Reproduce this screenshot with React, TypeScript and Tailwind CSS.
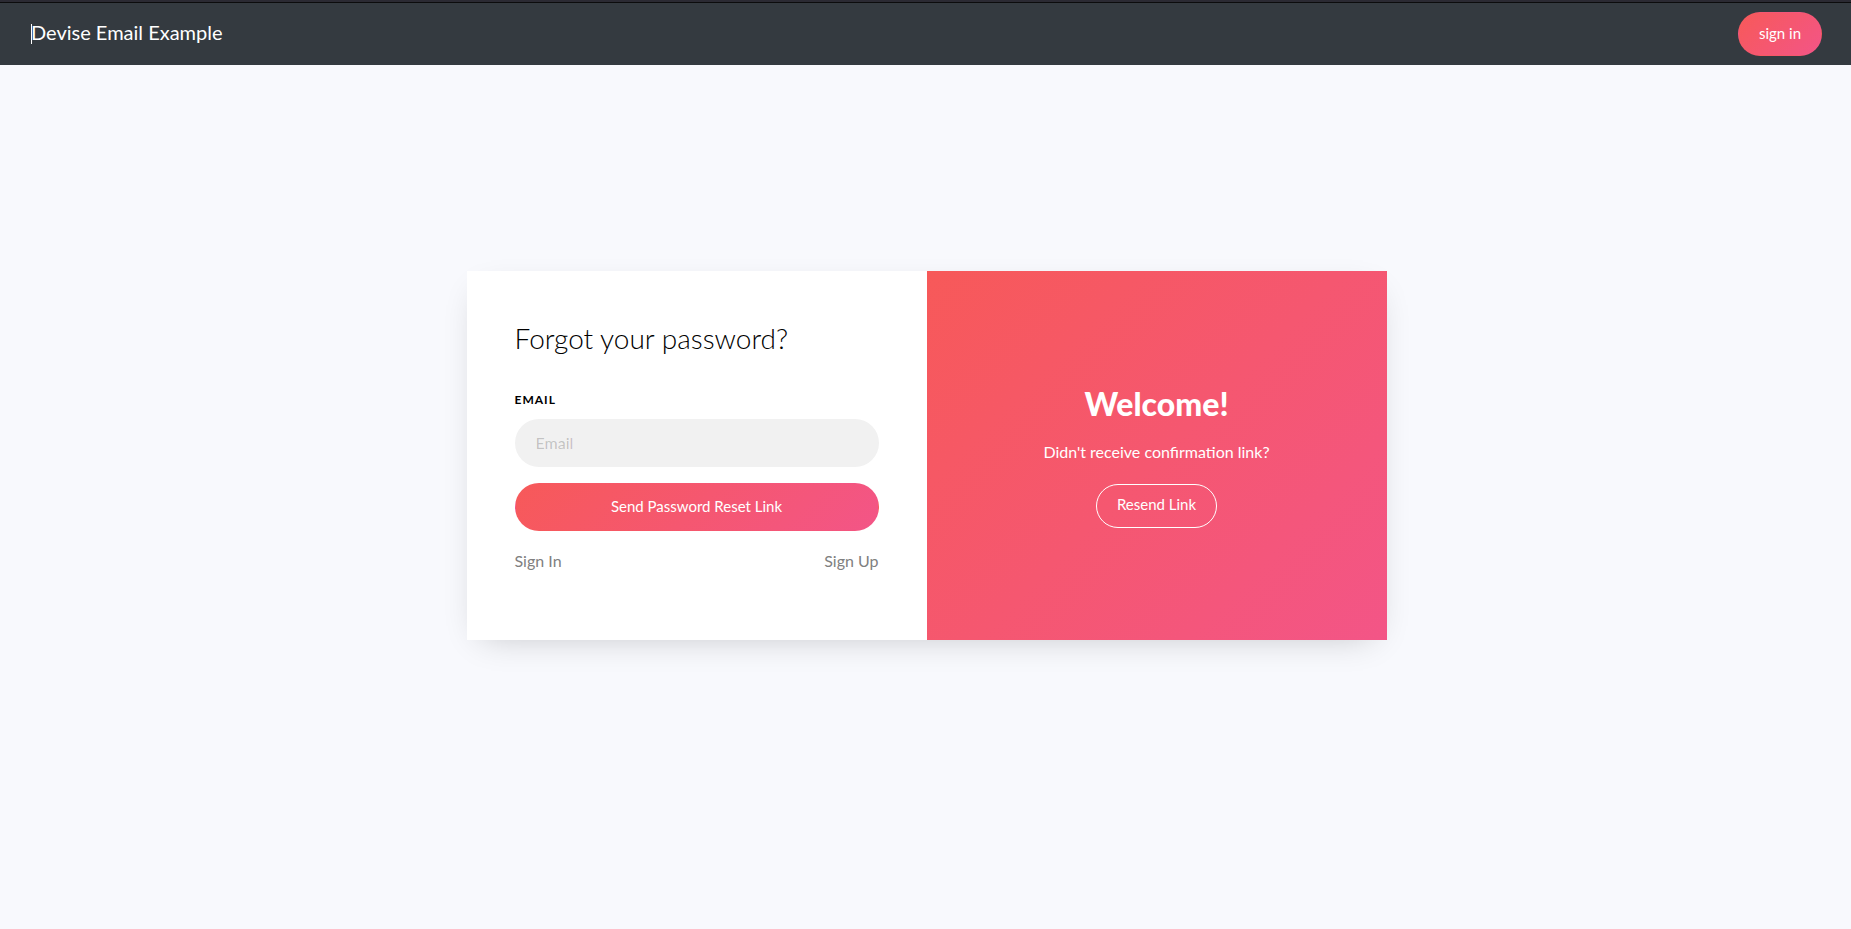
export default function App() {
  return (
    <div className="flex min-h-screen flex-col bg-[#f8f9fd] font-['Lato',sans-serif] text-base text-[#808080]">
      <header className="border-t-2 border-[#2b2a33]">
        <nav className="flex h-[63px] items-center justify-between border-t border-[#0c0c0d] bg-[#343a40] pr-[29px] pl-[31px]">
          <a href="#home" className="flex items-center border-l border-white text-xl leading-5 text-white">
            <span className="-ml-px pb-[3px] leading-[17px]">Devise Email Example</span>
          </a>
          <a
            href="#sign-in"
            className="flex h-11 items-center rounded-full border border-transparent bg-[linear-gradient(135deg,#f75959_0%,#f35587_100%)] px-5 pb-0.5 text-[15px] text-white"
          >
            sign in
          </a>
        </nav>
      </header>

      <main className="flex grow justify-center pt-[206px] pr-4 pb-16 pl-[18px]">
        <section className="grid w-full max-w-[920px] grid-cols-1 self-start bg-white shadow-[0_10px_34px_-15px_rgba(0,0,0,0.24)] md:grid-cols-2">
          <form className="flex flex-col px-12 pt-12 pb-[65px]" onSubmit={(e) => e.preventDefault()}>
            <h1 className="text-[28px] leading-[38px] font-light text-black">Forgot your password?</h1>
            <label
              htmlFor="email"
              className="mt-[34px] text-xs leading-[18px] font-bold tracking-[1px] text-black uppercase"
            >
              Email
            </label>
            <input
              id="email"
              type="email"
              placeholder="Email"
              className="mt-2.5 h-12 w-full rounded-full border border-transparent bg-[#f1f1f1] px-5 pb-0.5 text-base text-black outline-none placeholder:text-black/20"
            />
            <button
              type="submit"
              className="mt-4 h-12 w-full rounded-full border border-transparent bg-[linear-gradient(135deg,#f75959_0%,#f35587_100%)] pb-0.5 text-[15px] text-white"
            >
              Send Password Reset Link
            </button>
            <div className="mt-4 flex justify-between leading-7">
              <a href="#sign-in">Sign In</a>
              <a href="#sign-up">Sign Up</a>
            </div>
          </form>

          <div className="flex flex-col items-center justify-center bg-[linear-gradient(135deg,#f75959_0%,#f35587_100%)] p-12 text-center text-white">
            <h2 className="text-[32px] leading-10 font-black">Welcome!</h2>
            <p className="mt-[14px] leading-7">Didn't receive confirmation link?</p>
            <a
              href="#resend"
              className="mt-[18px] flex h-11 items-center rounded-full border border-white px-5 pb-0.5 text-[15px]"
            >
              Resend Link
            </a>
          </div>
        </section>
      </main>
    </div>
  );
}
